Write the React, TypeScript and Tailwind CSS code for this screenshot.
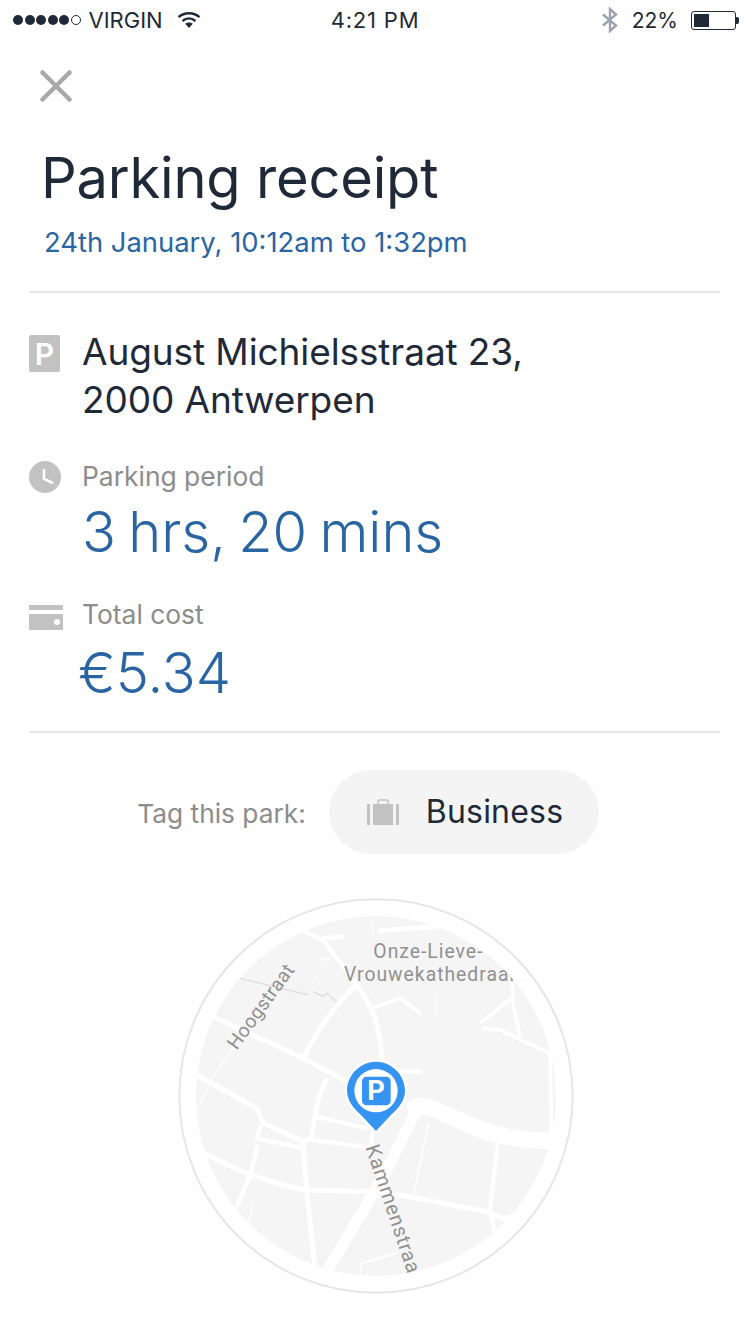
import React from "react";

const INK = "#1f2937";

function Wifi() {
  return (
    <svg width="24" height="18" viewBox="0 0 24 18" className="ml-[14px]">
      <path d="M1.5 6.2C7.5 1 16.500 1 22.500 6.200" fill="none" stroke={INK} strokeWidth="2.400" />
      <path d="M5.500 10C9.500 6.600 14.500 6.600 18.500 10" fill="none" stroke={INK} strokeWidth="2.400" />
      <path d="M8.200 12.800C10.500 11 13.500 11 15.800 12.800L12 17Z" fill={INK} />
    </svg>
  );
}

function StatusBar() {
  return (
    <div className="h-[40px] flex items-center justify-between pl-[13px] pr-[11px] text-[22px] leading-none" style={{ color: INK }}>
      <div className="w-[282px] flex items-center">
        <div className="flex gap-[1.500px] mr-[8px]">
          {[0, 1, 2, 3, 4].map((i) => (
            <span key={i} className="w-[10px] h-[10px] rounded-full bg-[#1f2937]" />
          ))}
          <span className="w-[10px] h-[10px] rounded-full border border-[#1f2937]" />
        </div>
        <span className="text-[22px]">VIRGIN</span>
        <Wifi />
      </div>
      <span className="text-[22px] tracking-[0.8px]">4:21 PM</span>
      <div className="w-[284px] flex items-center justify-end">
        <svg width="18" height="26" viewBox="0 0 18 26" className="mr-[13px]">
          <path d="M2 7.500L15 18.500L9 24V2L15 7.500L2 18.500" fill="none" stroke="#9ca3af" strokeWidth="2.400" />
        </svg>
        <span className="text-[21px] mr-[13px]">22%</span>
        <div className="w-[45px] h-[19px] rounded-[3px] border border-[#1f2937] p-[2px]">
          <div className="w-[15px] h-full bg-[#1f2937]" />
        </div>
        <div className="w-[3px] h-[7px] bg-[#1f2937] rounded-r-[2px]" />
      </div>
    </div>
  );
}

function Map() {
  const roads: [string, number][] = [
    ["M470 1145L640 860L740 660", 34],
    ["M735 650C780 640 830 680 950 725C1020 750 1100 752 1160 752", 50],
    ["M130 380L400 505L530 575", 15],
    ["M80 555L260 655L280 700L395 752", 15],
    ["M270 712L260 745L400 775", 13],
    ["M410 748L600 772", 13],
    ["M440 680L590 715", 13],
    ["M470 570C445 610 435 660 425 748", 14],
    ["M400 505C440 420 500 340 560 285C610 350 635 420 635 510", 15],
    ["M690 545H750", 14],
    ["M615 352L690 325L750 370", 11],
    ["M405 125L460 150L560 285", 13],
    ["M460 145L520 140", 13],
    ["M630 122L800 110", 14],
    ["M935 395L1025 325L1050 435", 11],
    ["M1025 280L1030 325", 10],
    ["M940 415L990 420L1140 490L1145 740", 11],
    ["M100 790L240 855L340 885L410 900L640 905L950 965L1000 985L1100 980", 15],
    ["M398 755L410 900L435 1135", 15],
    ["M262 770L240 855L195 965", 13],
    ["M982 770L960 960L975 1030", 13],
    ["M605 720V770", 12],
    ["M775 705L730 915", 5],
    ["M85 650L130 560L190 470", 4],
    ["M570 1150L575 1120L680 1090", 6],
    ["M797 320V372", 4],
    ["M600 80L612 130", 4],
    ["M250 935L235 1000", 4],
    ["M440 210L480 205L435 265L450 275L425 305", 3],
  ];
  return (
    <svg width="410" height="410" viewBox="0 0 1230 1230" className="block">
      <defs>
        <clipPath id="mapClip">
          <circle cx="618" cy="618" r="540" />
        </clipPath>
        <clipPath id="labelClip">
          <rect x="0" y="0" width="1035" height="1230" />
        </clipPath>
      </defs>
      <circle cx="618" cy="618" r="590" fill="#fff" stroke="#e6e6e6" strokeWidth="6" />
      <g clipPath="url(#mapClip)">
        <rect width="1230" height="1230" fill="#f5f5f5" />
        <path d="M210 265L415 315M430 305L460 320L470 310L500 335" fill="none" stroke="#dedede" strokeWidth="4" />
        {roads.map(([d, w], i) => (
          <path key={i} d={d} fill="none" stroke="#fff" strokeWidth={w} strokeLinejoin="round" strokeLinecap="round" />
        ))}
        <g fill="#919191" fontFamily="Roboto, sans-serif" fontSize="58">
          <g clipPath="url(#labelClip)">
            <text x="610" y="203" letterSpacing="3">Onze-Lieve-</text>
            <text x="522" y="272" letterSpacing="3">Vrouwekathedraal</text>
          </g>
          <text transform="translate(200 482) rotate(-54)" letterSpacing="1">Hoogstraat</text>
          <text transform="translate(586 772) rotate(71.500)" letterSpacing="2" fontSize="61">Kammenstraat</text>
        </g>
      </g>
      <path d="M618 507C668 507 712 550 712 602C712 640 686 664 666 684L618 733L570 684C550 664 525 640 525 602C525 550 568 507 618 507Z" fill="#fff" />
      <path d="M618 515C664 515 705 554 705 602C705 636 680 658 660 678L618 723L576 678C556 658 531 636 531 602C531 554 572 515 618 515Z" fill="#3593f2" />
      <circle cx="618" cy="602" r="65" fill="#fff" />
      <rect x="576" y="560" width="86" height="86" rx="14" fill="#3593f2" />
      <text x="618" y="631" textAnchor="middle" fill="#fff" fontFamily="Roboto, sans-serif" fontWeight="700" fontSize="82">P</text>
    </svg>
  );
}

export default function App() {
  return (
    <div className="w-[750px] h-[1334px] bg-white overflow-hidden" style={{ fontFamily: "Inter, sans-serif", color: INK }}>
      <StatusBar />
      <div className="pl-[40px] pt-[30px]">
        <svg width="32" height="32" viewBox="0 0 32 32" className="block">
          <path d="M2.500 2.500L29.500 29.500M29.500 2.500L2.500 29.500" stroke="#a9a9a9" strokeWidth="4.500" strokeLinecap="round" />
        </svg>
      </div>
      <div className="ml-[29px] mr-[30px]">
        <div className="pl-[13px] pt-[44px] pb-[33px] border-b-2 border-[#e6e6e6]">
          <h1 className="text-[56px] leading-[64px] font-normal -ml-[1px] tracking-[-0.2px]">Parking receipt</h1>
          <p className="text-[27.400px] leading-[32px] mt-[16px] pl-[2px] text-[#2a65a3]">24th January, 10:12am to 1:32pm</p>
        </div>
        <div className="pt-[35px] pb-[24px] border-b-2 border-[#e6e6e6]">
          <div className="flex">
            <div className="w-[53px] shrink-0 pt-[7px]">
              <div className="w-[31px] h-[37px] rounded-[2px] bg-[#c2c2c2] flex items-center justify-center text-white text-[30px] leading-none font-semibold">P</div>
            </div>
            <div className="text-[37px] leading-[48px] tracking-[-0.1px]">August Michielsstraat 23,<br />2000 Antwerpen</div>
          </div>
          <div className="flex mt-[37px]">
            <div className="w-[53px] shrink-0">
              <svg width="32" height="32" viewBox="0 0 32 32">
                <circle cx="16" cy="16" r="16" fill="#c2c2c2" />
                <path d="M15 8V18L24 22" fill="none" stroke="#fff" strokeWidth="2.500" />
              </svg>
            </div>
            <div>
              <div className="text-[26.400px] leading-[30px] text-[#8c8c8c]">Parking period</div>
              <div className="text-[56px] leading-[68px] mt-[7px] font-light text-[#2a65a3] [word-spacing:-3.500px]">3 hrs, 20 mins</div>
            </div>
          </div>
          <div className="flex mt-[33px]">
            <div className="w-[53px] shrink-0 pt-[6px]">
              <svg width="34" height="26" viewBox="0 0 34 26">
                <rect y="0" width="34" height="5" fill="#c2c2c2" />
                <rect y="9" width="34" height="16" fill="#c2c2c2" />
                <circle cx="28" cy="17" r="3" fill="#fff" />
              </svg>
            </div>
            <div>
              <div className="text-[26.400px] leading-[30px] text-[#8c8c8c]">Total cost</div>
              <div className="text-[56px] leading-[68px] mt-[10px] -ml-[4px] font-light text-[#2a65a3]">€5.34</div>
            </div>
          </div>
        </div>
      </div>
      <div className="flex items-center justify-center mt-[37px] pr-[14px]">
        <span className="text-[26.300px] text-[#8c8c8c] mr-[23px] pt-[4px]">Tag this park:</span>
        <div className="w-[270px] h-[84px] rounded-full bg-[#f4f4f5] flex items-center pl-[38px]">
          <svg width="32" height="26" viewBox="0 0 32 26" className="mr-[27px]">
            <path d="M11 5V2.500C11 1.500 12 1 13 1H19C20 1 21 1.500 21 2.500V5" fill="none" stroke="#c2c2c2" strokeWidth="1.500" />
            <rect x="6" y="5" width="20" height="21" fill="#c2c2c2" />
            <rect x="0" y="5" width="3" height="21" fill="#c2c2c2" />
            <rect x="29" y="5" width="3" height="21" fill="#c2c2c2" />
          </svg>
          <span className="text-[32px] tracking-[0.2px]">Business</span>
        </div>
      </div>
      <div className="flex justify-center mt-[36px]">
        <Map />
      </div>
    </div>
  );
}
